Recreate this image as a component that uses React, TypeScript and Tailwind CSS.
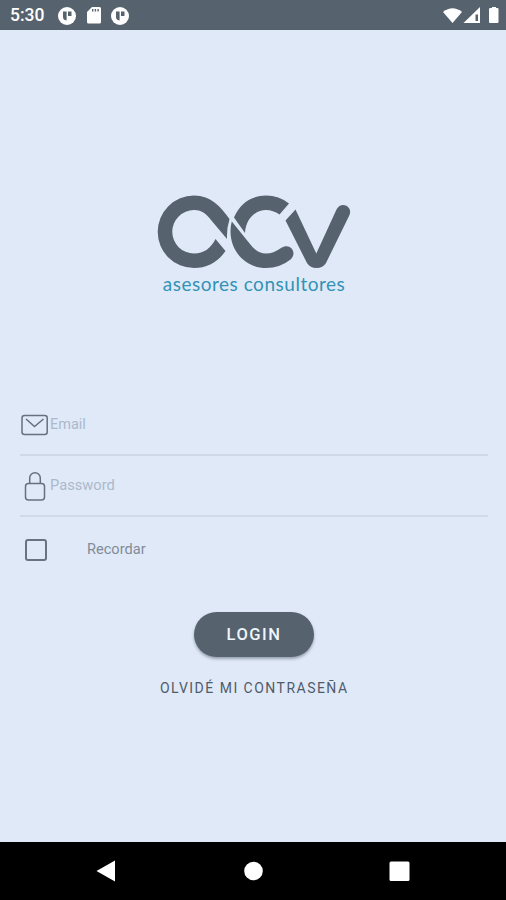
const AppDot = () => (
  <svg className="h-[18px] w-[18px]" viewBox="0 0 18 18">
    <circle cx="9" cy="9" r="9" fill="white" />
    <path d="M5 4.5h3.6v9Q5 13 5 10zM10 4.5h3.5V9H10z" fill="#56636e" />
  </svg>
);

const StatusBar = () => (
  <header className="flex h-[30px] shrink-0 items-center justify-between bg-[#56636e] pl-[10px] pr-[7px] pt-px text-white">
    <div className="flex items-center">
      <span className="w-[48px] text-[17.5px] font-medium leading-none">5:30</span>
      <AppDot />
      <svg className="ml-[11px] mr-[10px] h-[17px] w-[14px]" viewBox="0 0 14 17" fill="currentColor">
        <path fillRule="evenodd" d="M5 0h7.5A1.5 1.5 0 0 1 14 1.5V15a1.5 1.5 0 0 1-1.5 1.5h-11A1.5 1.5 0 0 1 0 15V5zM5 2v2.5h1.4V2zm2.7 0v2.5h1.4V2zm2.7 0v2.5h1.4V2z" />
      </svg>
      <AppDot />
    </div>
    <svg className="h-[18px] w-[56px]" viewBox="0 0 56 18" fill="currentColor">
      <path d="M0 5Q9.500-2.500 19 5L9.500 16z" />
      <path fillRule="evenodd" d="M37 0v16H20.500zM32.500 7.500V14H35V7.500z" />
      <path d="M47.500 1h1.500V0h4v1h1.500q1 0 1 1v13q0 1-1 1h-7.500q-1 0-1-1V2q0-1 1.500-1z" />
    </svg>
  </header>
);

const Logo = () => (
  <div className="mx-auto mt-[162px] flex w-[200px] flex-col items-center">
    <svg className="h-[80px] w-[200px]" viewBox="153 192 200 80" fill="#56636e">
      <path d="M229.500 219C221 207 211 195.500 194 195.500a36.300 36.300 0 1 0 0 72.600C207 268 218 262 225.500 251L215.500 239C211 248 204 253.500 194 253.500a21.700 21.700 0 1 1 0-43.400C202 210 207 215 211 220L227 239Q226.500 229 229.500 219z" />
      <path d="M234 217.500C240 203 252 195.500 266 195.500Q279 195.500 289 203.500L279.500 214.500Q273 210 266 210C257 210 246 217 245 233z" />
      <path d="M231.800 221.500L250 244Q257 253.500 266 253.500Q273.500 253.500 281 248C290 242 298 252.500 290.500 259.500Q280 268 266 268C247 268 230.500 253 230.500 231Q230.500 226 231.800 221.500z" />
      <path d="M295.500 209.500L316.300 253.500L336.500 209.500C341 200.500 353 206 349.500 215L326 263Q323 268 316.500 268Q310 268 307 263L285.500 220.500z" />
    </svg>
    <p className="mt-px whitespace-nowrap pl-[2px] font-['Lato'] text-[19px] leading-[22px] tracking-[0.52px] text-[#3293b5]">
      asesores consultores
    </p>
  </div>
);

export default function App() {
  return (
    <div className="flex h-[900px] w-[506px] flex-col overflow-hidden bg-[#e0e9f8] font-[Roboto,sans-serif]">
      <StatusBar />
      <main className="flex flex-1 flex-col">
        <Logo />
        <form className="mt-[100px] flex flex-col pl-[20px] pr-[18px]">
          <label className="flex h-[61px] items-center border-b-2 border-[#cfd8e6] text-[14.5px] text-[#abb9cb]">
            <svg className="h-[22px] w-[28px] shrink-0" viewBox="0 0 28 22" fill="none" stroke="#65717d" strokeWidth="1.5">
              <rect x="2" y="1.5" width="25.2" height="19" rx="2.5" />
              <path d="M6 5l8.500 7.500L23.500 5" />
            </svg>
            <span className="ml-[2px] pt-px">Email</span>
          </label>
          <label className="flex h-[61px] items-center border-b-2 border-[#d0d9e6] text-[14.7px] text-[#abb9cb]">
            <svg className="h-[30px] w-[28px] shrink-0" viewBox="0 0 28 30" fill="none" stroke="#65717d" strokeWidth="1.5">
              <rect x="5.5" y="12.5" width="19" height="16.5" rx="3" />
              <path d="M9.700 12.500V7a5.300 5.300 0 0 1 10.600 0v5.500" />
            </svg>
            <span className="ml-[2px]">Password</span>
          </label>
          <label className="flex h-[65px] items-center text-[14.6px] text-[#808c99]">
            <span className="ml-[5px] size-[22px] rounded-[3px] border-2 border-[#68737f]" />
            <span className="ml-[40px]">Recordar</span>
          </label>
          <button type="button" className="ml-[174px] mt-[30px] h-[45px] w-[120px] rounded-full bg-[#56636e] pt-px text-[16.5px] font-medium tracking-[1.5px] text-[#eef5fb] shadow-[0_2px_3px_rgba(60,75,90,0.45)]">
            LOGIN
          </button>
          <a href="#" className="ml-[140px] mt-[21px] whitespace-nowrap text-[14px] leading-[20px] tracking-[1.48px] text-[#505c68]">
            OLVIDÉ MI CONTRASEÑA
          </a>
        </form>
      </main>
      <nav className="flex h-[58px] shrink-0 bg-black">
        <svg className="h-[58px] w-[506px]" viewBox="0 842 506 58" fill="white">
          <path d="M96.500 871L115 860.500V881.500z" />
          <circle cx="253.5" cy="871" r="9.3" />
          <rect x="389.5" y="861.5" width="20" height="19.5" rx="1.5" />
        </svg>
      </nav>
    </div>
  );
}
